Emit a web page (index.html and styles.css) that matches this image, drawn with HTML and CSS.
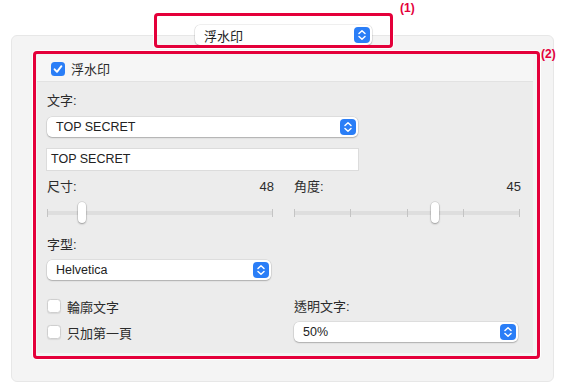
FILE: index.html
```html
<!DOCTYPE html>
<html lang="zh-TW">
<head>
  <meta charset="UTF-8">
  <meta name="viewport" content="width=device-width, initial-scale=1.0">
  <title>浮水印</title>
  <link rel="stylesheet" href="styles.css">
</head>
<body>
  <div class="page">
    <div class="popup popup-top">
      <span>浮水印</span>
      <svg class="stepper" viewBox="0 0 16 16"><rect width="16" height="16" rx="4"/><path d="M5 6.5L8 3.8L11 6.5M5 9.5L8 12.2L11 9.5"/></svg>
    </div>

    <div class="panel">
      <div class="group">
        <div class="group-head">
          <svg class="check on" viewBox="0 0 14 14"><rect width="14" height="14" rx="3.5"/><path d="M3.6 7.3L6 9.8L10.4 4.2"/></svg>
          <span>浮水印</span>
        </div>

        <div class="group-body">
          <div class="label">文字:</div>
          <div class="popup popup-wide">
            <span>TOP SECRET</span>
            <svg class="stepper" viewBox="0 0 16 16"><rect width="16" height="16" rx="4"/><path d="M5 6.5L8 3.8L11 6.5M5 9.5L8 12.2L11 9.5"/></svg>
          </div>
          <div class="field">TOP SECRET</div>

          <div class="cols sliders">
            <div class="col">
              <div class="value-row"><span>尺寸:</span><span>48</span></div>
              <div class="slider">
                <div class="ticks"><i></i><i></i></div>
                <div class="knob" style="left: 31px"></div>
              </div>
            </div>
            <div class="col">
              <div class="value-row"><span>角度:</span><span>45</span></div>
              <div class="slider">
                <div class="ticks"><i></i><i></i><i></i><i></i><i></i></div>
                <div class="knob" style="left: 137px"></div>
              </div>
            </div>
          </div>

          <div class="label label-font">字型:</div>
          <div class="popup popup-half">
            <span>Helvetica</span>
            <svg class="stepper" viewBox="0 0 16 16"><rect width="16" height="16" rx="4"/><path d="M5 6.5L8 3.8L11 6.5M5 9.5L8 12.2L11 9.5"/></svg>
          </div>

          <div class="cols options">
            <div class="col">
              <div class="check-row"><span class="check off"></span><span>輪廓文字</span></div>
              <div class="check-row"><span class="check off"></span><span>只加第一頁</span></div>
            </div>
            <div class="col">
              <div class="label label-alpha">透明文字:</div>
              <div class="popup popup-half">
                <span>50%</span>
                <svg class="stepper" viewBox="0 0 16 16"><rect width="16" height="16" rx="4"/><path d="M5 6.5L8 3.8L11 6.5M5 9.5L8 12.2L11 9.5"/></svg>
              </div>
            </div>
          </div>
        </div>
      </div>
    </div>

    <!-- 說明用的紅框 -->
    <div class="mark mark-1"></div>
    <span class="mark-label mark-label-1">(1)</span>
    <div class="mark mark-2"></div>
    <span class="mark-label mark-label-2">(2)</span>
  </div>
</body>
</html>
```

FILE: styles.css
```css
body {
  margin: 0;
  background: #fff;
  font-family: "Liberation Sans", "Noto Sans CJK TC", sans-serif;
  font-size: 13px;
  color: #2b2b2b;
}

.page {
  position: relative;
  width: 565px;
  height: 389px;
  padding-top: 25px;
  box-sizing: border-box;
}

/* 下拉選單 */
.popup {
  display: flex;
  align-items: center;
  justify-content: space-between;
  height: 20px;
  padding: 0 2px 0 9px;
  box-sizing: border-box;
  background: #fff;
  border-radius: 5px;
  box-shadow: 0 0 0 0.5px rgba(0, 0, 0, 0.12), 0 1px 1.5px rgba(0, 0, 0, 0.22);
  font-size: 12.5px;
  color: #222;
}
.popup-top {
  position: relative;
  z-index: 1;
  width: 177px;
  margin-left: 195px;
  font-size: 13px;
}
.popup-wide { width: 311px; margin-top: 8px; }
.popup-half { width: 224px; }

.stepper {
  width: 16px;
  height: 16px;
  flex: none;
}
.stepper rect { fill: #2a7ef7; }
.stepper path {
  fill: none;
  stroke: #fff;
  stroke-width: 1.5;
  stroke-linecap: round;
  stroke-linejoin: round;
}

.panel {
  margin: -10px 0 0 11px;
  width: 543px;
  height: 347px;
  box-sizing: border-box;
  padding: 20px 20px 0 25px;
  background: #f4f4f4;
  border: 1px solid #e7e7e7;
  border-radius: 6px;
}

.group {
  width: 496px;
}
.group-head {
  display: flex;
  align-items: center;
  gap: 6px;
  height: 25px;
  padding-left: 14px;
  background: #f6f6f6;
}
.group-body {
  height: 272px;
  box-sizing: border-box;
  padding: 11px 11px 0 10px;
  background: #ececec;
  border-top: 1px solid #e2e2e2;
}

.check {
  width: 14px;
  height: 14px;
  flex: none;
  box-sizing: border-box;
}
.check.on rect { fill: #2a7ef7; }
.check.on path {
  fill: none;
  stroke: #fff;
  stroke-width: 1.9;
  stroke-linecap: round;
  stroke-linejoin: round;
}
.check.off {
  display: inline-block;
  background: #fff;
  border: 1px solid #cfcfcf;
  border-radius: 3.5px;
  box-shadow: 0 0.5px 1px rgba(0, 0, 0, 0.08);
}

.label {
  line-height: 16px;
}
.label-font { margin-top: 13px; margin-bottom: 7px; }
.label-alpha { margin-top: 6px; margin-bottom: 7px; }

.field {
  width: 311px;
  height: 21px;
  margin-top: 12px;
  box-sizing: border-box;
  padding-left: 4px;
  line-height: 21px;
  background: #fff;
  box-shadow: 0 0 0 1px #dcdcdc, 0 1px 0 #cfcfcf;
  font-size: 12.5px;
  color: #222;
}

.cols {
  display: grid;
  grid-template-columns: 227px 227px;
  column-gap: 20px;
}
.sliders { margin-top: 9px; }
.options { margin-top: 13px; }

.value-row {
  display: flex;
  justify-content: space-between;
  line-height: 16px;
}

/* 滑桿 */
.slider {
  position: relative;
  height: 22px;
  margin-top: 7px;
  width: 226px;
}
.ticks {
  display: flex;
  justify-content: space-between;
  align-items: center;
  height: 100%;
  background: linear-gradient(#dedede, #dedede) no-repeat center / 100% 4px;
  border-radius: 2px;
}
.ticks i {
  width: 1px;
  height: 8px;
  background: #c4c4c4;
}
.knob {
  position: absolute;
  top: 0;
  width: 8px;
  height: 21px;
  background: #fff;
  border-radius: 4px;
  box-shadow: 0 0 0 0.5px rgba(0, 0, 0, 0.15), 0 1px 2px rgba(0, 0, 0, 0.3);
}

.check-row {
  display: flex;
  align-items: center;
  gap: 6px;
  height: 26px;
}

/* 紅色標示框 */
.mark {
  position: absolute;
  border: 3px solid #e4003a;
  border-radius: 4px;
  box-shadow: 0 0 0 1px #fff;
  box-sizing: border-box;
}
.mark-1 { left: 154px; top: 13px; width: 239px; height: 35px; z-index: 2; }
.mark-2 { left: 33px; top: 51px; width: 507px; height: 308px; }

.mark-label {
  position: absolute;
  font-weight: bold;
  font-size: 12px;
  color: #e4003a;
}
.mark-label-1 { left: 400px; top: 1px; }
.mark-label-2 { left: 541px; top: 47px; }
```
